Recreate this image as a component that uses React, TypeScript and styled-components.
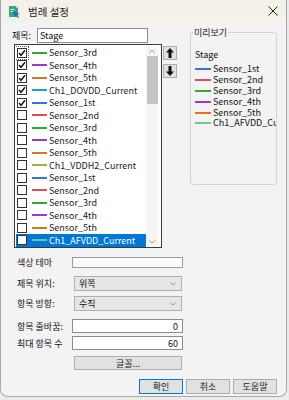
import React from "react";
import styled, { createGlobalStyle } from "styled-components";

const GlobalStyle = createGlobalStyle`
  html, body {
    margin: 0;
    padding: 0;
    background: #e9ece8;
  }
  body {
    font-family: "Noto Sans CJK KR", "Noto Sans", sans-serif;
    font-size: 9px;
    color: #111;
  }
`;

const Window = styled.div`
  box-sizing: border-box;
  width: 287px;
  height: 397px;
  background: #f3f3f3;
  border: 1px solid #a9a9a9;
  border-top: none;
  border-radius: 0 0 8px 8px;
  display: flex;
  flex-direction: column;
  overflow: hidden;
`;

const TitleBar = styled.div`
  height: 22px;
  background: #f4f2e8;
  display: flex;
  align-items: center;
  padding: 0 8px 0 7px;
  .title {
    margin-left: 7px;
    font-size: 10.5px;
    color: #222;
    flex: 1;
  }
`;

const Body = styled.div`
  display: flex;
  flex-direction: column;
  padding: 5px 9px 0 11px;
`;

const Top = styled.div`
  display: flex;
  align-items: flex-start;
`;

const LeftCol = styled.div`
  display: flex;
  flex-direction: column;
  width: 166px;
`;

const TitleRow = styled.div`
  display: flex;
  align-items: center;
  height: 16px;
  .label {
    width: 25px;
  }
`;

const TextBox = styled.div<{ $w: number; $h: number; $align?: string; $soft?: boolean }>`
  box-sizing: border-box;
  width: ${(p) => p.$w}px;
  height: ${(p) => p.$h}px;
  background: ${(p) => (p.$soft ? "#fbfbfb" : "#fff")};
  border: 1px solid ${(p) => (p.$soft ? "#9c9c9c" : "#8c8c8c")};
  display: flex;
  align-items: center;
  justify-content: ${(p) => p.$align || "flex-start"};
  padding: 0 4px 0 2px;
  line-height: 1;
`;

const ListRow = styled.div`
  display: flex;
  align-items: flex-start;
  margin-top: 1px;
`;

const ListBox = styled.div`
  box-sizing: border-box;
  margin-left: 2px;
  width: 148px;
  height: 204px;
  border: 1px solid #3a3a3a;
  background: #fff;
  display: flex;
`;

const Items = styled.div`
  flex: 1;
  padding-top: 1.5px;
  margin-left: 1px;
  overflow: hidden;
`;

const Item = styled.div<{ $selected?: boolean }>`
  height: 12.5px;
  display: flex;
  align-items: center;
  padding-left: 1px;
  background: ${(p) => (p.$selected ? "#0078d7" : "transparent")};
  color: ${(p) => (p.$selected ? "#fff" : "#1a1a1a")};
  white-space: nowrap;
  line-height: 11px;
`;

const CheckBox = styled.div<{ $focus?: boolean }>`
  box-sizing: border-box;
  width: 10px;
  height: 10px;
  border: 1px solid #333;
  background: #fff;
  flex: none;
  display: flex;
  align-items: center;
  justify-content: center;
  outline: ${(p) => (p.$focus ? "1px dotted #555" : "none")};
  outline-offset: 1px;
`;

const Swatch = styled.span<{ $color: string; $w?: number; $gap?: number }>`
  display: inline-block;
  flex: none;
  width: ${(p) => p.$w || 15}px;
  height: 2px;
  background: ${(p) => p.$color};
  margin: 0 2px 0 ${(p) => (p.$gap === undefined ? 5 : p.$gap)}px;
`;

const ScrollBar = styled.div`
  width: 12px;
  margin: 1px 3px 1px 0;
  display: flex;
  flex-direction: column;
  align-items: center;
  background: #f6f6f6;
`;

const ScrollArrow = styled.div`
  height: 9px;
  display: flex;
  align-items: center;
`;

const Thumb = styled.div`
  width: 11px;
  height: 48px;
  margin-top: 1px;
  background: #c4c4c4;
`;

const ArrowCol = styled.div`
  display: flex;
  flex-direction: column;
  gap: 4px;
  margin-left: 1px;
  margin-top: 2px;
`;

const SmallButton = styled.div`
  box-sizing: border-box;
  width: 14px;
  height: 14px;
  background: #e1e1e1;
  border: 1px solid #adadad;
  display: flex;
  align-items: center;
  justify-content: center;
`;

const Group = styled.fieldset`
  box-sizing: border-box;
  margin: 0 0 0 12px;
  padding: 11px 0 0 4px;
  width: 87px;
  height: 158px;
  border: 1px solid #d3d3d3;
  border-radius: 3px;
  min-width: 0;
  overflow: hidden;
  legend {
    padding: 0 1px;
    margin-left: -2px;
    line-height: 11px;
    color: #222;
  }
  .stage {
    line-height: 11px;
    margin-bottom: 4px;
  }
`;

const PreviewRow = styled.div`
  display: flex;
  align-items: center;
  height: 10.8px;
  line-height: 10px;
  white-space: nowrap;
`;

const Form = styled.div`
  display: flex;
  flex-direction: column;
  padding-left: 5px;
  margin-top: 8px;
`;

const FieldRow = styled.div<{ $top: number }>`
  display: flex;
  align-items: center;
  margin-top: ${(p) => p.$top}px;
  .label {
    width: 55px;
    flex: none;
    white-space: nowrap;
  }
`;

const Combo = styled.div`
  box-sizing: border-box;
  width: 108px;
  height: 15px;
  margin-left: 2px;
  background: #e6e6e6;
  border: 1px solid #b0b0b0;
  display: flex;
  align-items: center;
  justify-content: space-between;
  padding: 0 5px 0 4px;
`;

const PushButton = styled.div<{ $w: number; $h?: number; $ml?: number; $default?: boolean }>`
  box-sizing: border-box;
  width: ${(p) => p.$w}px;
  height: ${(p) => p.$h || 15}px;
  margin-left: ${(p) => p.$ml || 0}px;
  background: #e1e1e1;
  border: 1px solid ${(p) => (p.$default ? "#0078d7" : "#adadad")};
  display: flex;
  align-items: center;
  justify-content: center;
  color: #1a1a1a;
`;

const ButtonRow = styled.div`
  display: flex;
  justify-content: flex-end;
  gap: 3px;
  margin-top: 9px;
`;

const Chevron = ({ up }: { up?: boolean }) => (
  <svg width="6" height="4" viewBox="0 0 6 4">
    <polyline
      points={up ? "0.5,3.5 3,1 5.5,3.5" : "0.5,0.5 3,3 5.5,0.5"}
      fill="none"
      stroke="#8a8a8a"
      strokeWidth="0.9"
    />
  </svg>
);

const Arrow = ({ down }: { down?: boolean }) => (
  <svg width="8" height="10" viewBox="0 0 8 10" style={down ? { transform: "rotate(180deg)" } : undefined}>
    <path d="M4 0 L8 4.5 L5.5 4.5 L5.5 10 L2.5 10 L2.5 4.5 L0 4.5 Z" fill="#111" />
  </svg>
);

const Check = () => (
  <svg width="8" height="8" viewBox="0 0 8 8">
    <polyline points="1,4 3,6.3 7,1.3" fill="none" stroke="#111" strokeWidth="1.4" />
  </svg>
);

const AppIcon = () => (
  <svg width="13" height="13" viewBox="0 0 13 13">
    <path d="M1 1 H8 L10 3 V12 H1 Z" fill="#3aa57a" />
    <path d="M8 1 V3 H10" fill="#9fdcc0" />
    <rect x="2.5" y="4" width="4" height="1" fill="#d8f2e6" />
    <rect x="2.5" y="6" width="3" height="1" fill="#d8f2e6" />
    <path d="M5 6 L12 9 L9 9.8 L11 12.5 L10 13 L8.3 10.4 L6.5 12 Z" fill="#1f6fd6" />
  </svg>
);

const CloseIcon = () => (
  <svg width="10" height="10" viewBox="0 0 10 10">
    <path d="M0.5 0.5 L9.5 9.5 M9.5 0.5 L0.5 9.5" stroke="#222" strokeWidth="1" />
  </svg>
);

const C = {
  s1: "#3a6fe6",
  s2: "#d8505e",
  s3: "#2eaa36",
  s4: "#9a36dc",
  s5: "#dc7420",
  dovdd: "#1c9fcf",
  vddh2: "#98b636",
  afvdd: "#6cc890",
};

const listItems = [
  { name: "Sensor_3rd", color: C.s3, checked: true },
  { name: "Sensor_4th", color: C.s4, checked: true },
  { name: "Sensor_5th", color: C.s5, checked: true },
  { name: "Ch1_DOVDD_Current", color: C.dovdd, checked: true },
  { name: "Sensor_1st", color: C.s1, checked: true },
  { name: "Sensor_2nd", color: C.s2 },
  { name: "Sensor_3rd", color: C.s3 },
  { name: "Sensor_4th", color: C.s4 },
  { name: "Sensor_5th", color: C.s5 },
  { name: "Ch1_VDDH2_Current", color: C.vddh2 },
  { name: "Sensor_1st", color: C.s1 },
  { name: "Sensor_2nd", color: C.s2 },
  { name: "Sensor_3rd", color: C.s3 },
  { name: "Sensor_4th", color: C.s4 },
  { name: "Sensor_5th", color: C.s5 },
  { name: "Ch1_AFVDD_Current", color: C.afvdd, selected: true },
];

const preview = [
  { name: "Sensor_1st", color: C.s1 },
  { name: "Sensor_2nd", color: C.s2 },
  { name: "Sensor_3rd", color: C.s3 },
  { name: "Sensor_4th", color: C.s4 },
  { name: "Sensor_5th", color: C.s5 },
  { name: "Ch1_AFVDD_Current", color: C.afvdd },
];

const App: React.FC = () => {
  return (
    <>
      <GlobalStyle />
      <Window>
        <TitleBar>
          <AppIcon />
          <span className="title">범례 설정</span>
          <CloseIcon />
        </TitleBar>
        <Body>
          <Top>
            <LeftCol>
              <TitleRow>
                <span className="label">제목:</span>
                <TextBox $w={111} $h={15}>Stage</TextBox>
              </TitleRow>
              <ListRow>
                <ListBox>
                  <Items>
                    {listItems.map((it, i) => (
                      <Item key={i} $selected={it.selected}>
                        <CheckBox $focus={i === 0}>{it.checked && <Check />}</CheckBox>
                        <Swatch $color={it.color} />
                        <span>{it.name}</span>
                      </Item>
                    ))}
                  </Items>
                  <ScrollBar>
                    <ScrollArrow>
                      <Chevron up />
                    </ScrollArrow>
                    <Thumb />
                    <div style={{ flex: 1 }} />
                    <ScrollArrow>
                      <Chevron />
                    </ScrollArrow>
                  </ScrollBar>
                </ListBox>
                <ArrowCol>
                  <SmallButton>
                    <Arrow />
                  </SmallButton>
                  <SmallButton>
                    <Arrow down />
                  </SmallButton>
                </ArrowCol>
              </ListRow>
            </LeftCol>
            <Group>
              <legend>미리보기</legend>
              <div className="stage">Stage</div>
              {preview.map((p, i) => (
                <PreviewRow key={i}>
                  <Swatch $color={p.color} $w={16} $gap={0} />
                  <span>{p.name}</span>
                </PreviewRow>
              ))}
            </Group>
          </Top>
          <Form>
            <FieldRow $top={0}>
              <span className="label">색상 테마</span>
              <TextBox $w={111} $h={11} $soft />
            </FieldRow>
            <FieldRow $top={7}>
              <span className="label">제목 위치:</span>
              <Combo>
                <span>위쪽</span>
                <Chevron />
              </Combo>
            </FieldRow>
            <FieldRow $top={5}>
              <span className="label">항목 방향:</span>
              <Combo>
                <span>수직</span>
                <Chevron />
              </Combo>
            </FieldRow>
            <FieldRow $top={8}>
              <span className="label">항목 줄바꿈:</span>
              <TextBox $w={111} $h={14} $align="flex-end">0</TextBox>
            </FieldRow>
            <FieldRow $top={3}>
              <span className="label">최대 항목 수</span>
              <TextBox $w={111} $h={14} $align="flex-end">60</TextBox>
            </FieldRow>
            <FieldRow $top={6}>
              <span className="label" />
              <PushButton $w={108} $h={14} $ml={2}>글꼴...</PushButton>
            </FieldRow>
          </Form>
          <ButtonRow>
            <PushButton $w={44} $default>확인</PushButton>
            <PushButton $w={44}>취소</PushButton>
            <PushButton $w={44}>도움말</PushButton>
          </ButtonRow>
        </Body>
      </Window>
    </>
  );
};

export default App;
